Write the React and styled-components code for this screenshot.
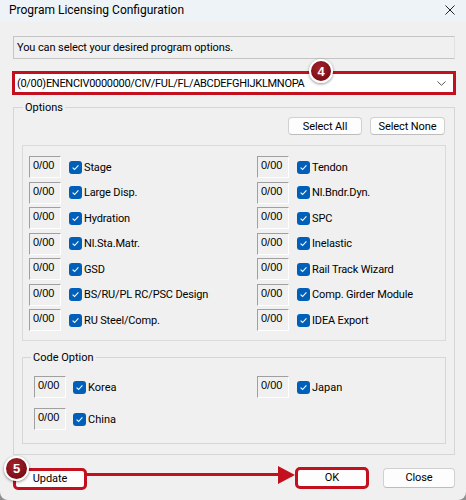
import React from "react";
import styled, { createGlobalStyle } from "styled-components";

const ui = `Roboto, "Noto Sans", "Liberation Sans", sans-serif`;
const classic = `"Liberation Sans", Arial, sans-serif`;
const red = "#c3101e";

const GlobalStyle = createGlobalStyle`
  html, body {
    margin: 0;
    padding: 0;
    background: #8f8f8f;
  }
  body {
    font-family: ${ui};
  }
`;

const Window = styled.div`
  width: 466px;
  height: 500px;
  background: #f0f0f0;
  border-radius: 0 0 8px 8px;
  overflow: hidden;
  display: flex;
  flex-direction: column;
  font-family: ${ui};
  color: #000;
`;

const TitleBar = styled.div`
  height: 22px;
  flex: none;
  box-sizing: border-box;
  padding: 0 11px 2px 9px;
  display: flex;
  align-items: center;
  justify-content: space-between;
  background: #eef3f8;
  font-size: 12px;
`;

const Body = styled.div`
  flex: 1;
  display: flex;
  flex-direction: column;
  padding: 0 11px 0 13px;
`;

const InfoBox = styled.div`
  margin-top: 14px;
  height: 23px;
  box-sizing: border-box;
  padding-left: 3px;
  display: flex;
  align-items: center;
  border: 1px solid #c4c4c4;
  border-right-color: #e2e2e2;
  font-size: 11px;
  letter-spacing: -0.1px;
`;

const ComboWrap = styled.div`
  position: relative;
  margin: 12px -1px 0;
`;

const Combo = styled.div`
  height: 24px;
  box-sizing: border-box;
  border: 3px solid ${red};
  background: #fff;
  padding: 0 7px 0 2px;
  display: flex;
  align-items: center;
  justify-content: space-between;
  font-size: 11px;
  letter-spacing: -0.3px;
`;

const Badge = styled.div`
  position: absolute;
  left: ${(p) => p.$left}px;
  top: ${(p) => p.$top}px;
  width: ${(p) => p.$size}px;
  height: ${(p) => p.$size}px;
  box-sizing: border-box;
  border-radius: 50%;
  border: 2px solid #fff;
  background: radial-gradient(circle at 40% 35%, #a3222b, #7c0f17 70%);
  box-shadow: 0 1px 3px rgba(0, 0, 0, 0.45);
  color: #fff;
  font-family: ${classic};
  font-weight: bold;
  font-size: 13px;
  display: flex;
  align-items: center;
  justify-content: center;
  z-index: 2;
`;

const Group = styled.fieldset`
  margin: ${(p) => p.$mt}px 0 0;
  padding: ${(p) => p.$pad};
  min-width: 0;
  border: 1px solid #d6d6d6;
`;

const Legend = styled.legend`
  margin-left: ${(p) => p.$ml}px;
  padding: 0 2px;
  font-size: 11px;
  line-height: 15px;
`;

const SelectRow = styled.div`
  display: flex;
  justify-content: flex-end;
  gap: 8px;
  padding-right: 1px;
`;

const Button = styled.button`
  width: ${(p) => p.$w}px;
  height: ${(p) => p.$h}px;
  box-sizing: border-box;
  padding: 0;
  background: #fdfdfd;
  border: 1px solid #d0d0d0;
  border-bottom-color: #bdbdbd;
  border-radius: 4px;
  font-family: ${ui};
  font-size: 11px;
  letter-spacing: -0.1px;
  color: #000;
  outline: ${(p) => (p.$marked ? `3px solid ${red}` : "none")};
  outline-offset: -2px;
  flex: none;
`;

const CheckPanel = styled.div`
  margin-top: 10px;
  border: 1px solid #dadada;
  padding: 10px 0 9px 6px;
  display: grid;
  grid-template-columns: 228px 1fr;
  grid-template-rows: repeat(7, 22px);
  grid-auto-flow: column;
  row-gap: 3.5px;
`;

const CodeGrid = styled.div`
  display: grid;
  grid-template-columns: 223px 1fr;
  grid-auto-rows: 22px;
  row-gap: 10px;
`;

const Option = styled.div`
  display: flex;
  align-items: center;
`;

const ValueBox = styled.div`
  width: 32px;
  height: 22px;
  box-sizing: border-box;
  flex: none;
  padding: 1px 0 0 3px;
  background: #f0f0f0;
  border: 1px solid #fff;
  border-top-color: #a0a0a0;
  border-left-color: #a0a0a0;
  font-family: ${classic};
  font-size: 11px;
  line-height: 14px;
`;

const Check = styled.span`
  width: 13px;
  height: 13px;
  flex: none;
  margin-left: ${(p) => p.$ml}px;
  border-radius: 3px;
  background: #005fb8;
  display: flex;
  align-items: center;
  justify-content: center;
`;

const Label = styled.span`
  margin-left: 2px;
  font-family: ${ui};
  font-size: 11px;
  letter-spacing: ${(p) => (p.$ui ? 0 : -0.15)}px;
  white-space: nowrap;
`;

const Footer = styled.div`
  margin: 12px 0 0 1px;
  display: flex;
  align-items: center;
`;

const Marked = styled.div`
  position: relative;
  flex: none;
`;

const Arrow = styled.svg`
  flex: 1;
  height: 20px;
  overflow: visible;
`;

const CloseGap = styled.div`
  width: 15px;
  flex: none;
`;

const Tick = () => (
  <svg width="9" height="9" viewBox="0 0 9 9">
    <path d="M1.6 4.6 L3.6 6.5 L7.4 2.3" fill="none" stroke="#fff" strokeWidth="1.1" />
  </svg>
);

const OptionItem = ({ label, ml = 8, uiFont }) => (
  <Option>
    <ValueBox>0/00</ValueBox>
    <Check $ml={ml}>
      <Tick />
    </Check>
    <Label $ui={uiFont}>{label}</Label>
  </Option>
);

const options = [
  "Stage",
  "Large Disp.",
  "Hydration",
  "Nl.Sta.Matr.",
  "GSD",
  "BS/RU/PL RC/PSC Design",
  "RU Steel/Comp.",
  "Tendon",
  "Nl.Bndr.Dyn.",
  "SPC",
  "Inelastic",
  "Rail Track Wizard",
  "Comp. Girder Module",
  "IDEA Export",
];

export default function App() {
  return (
    <>
      <GlobalStyle />
      <Window>
        <TitleBar>
          <span>Program Licensing Configuration</span>
          <svg width="10" height="10" viewBox="0 0 10 10">
            <path d="M0.5 0.5 L9.5 9.5 M9.5 0.5 L0.5 9.5" stroke="#222" strokeWidth="1" />
          </svg>
        </TitleBar>
        <Body>
          <InfoBox>You can select your desired program options.</InfoBox>
          <ComboWrap>
            <Combo>
              <span>(0/00)ENENCIV0000000/CIV/FUL/FL/ABCDEFGHIJKLMNOPA</span>
              <svg width="9" height="5" viewBox="0 0 9 5">
                <path d="M0.5 0.5 L4.5 4.3 L8.5 0.5" fill="none" stroke="#555" strokeWidth="1" />
              </svg>
            </Combo>
            <Badge $left={297} $top={-12} $size={24}>4</Badge>
          </ComboWrap>

          <Group $mt={5} $pad="2px 8px 10px 8px">
            <Legend $ml={1}>Options</Legend>
            <SelectRow>
              <Button $w={74} $h={18}>Select All</Button>
              <Button $w={75} $h={18}>Select None</Button>
            </SelectRow>
            <CheckPanel>
              {options.map((o) => (
                <OptionItem key={o} label={o} />
              ))}
            </CheckPanel>
            <Group $mt={9} $pad="11px 0 13px 11px">
              <Legend $ml={-3}>Code Option</Legend>
              <CodeGrid>
                <OptionItem label="Korea" ml={7} uiFont />
                <OptionItem label="Japan" ml={8} uiFont />
                <OptionItem label="China" ml={7} uiFont />
              </CodeGrid>
            </Group>
          </Group>

          <Footer>
            <Marked>
              <Button $w={72} $h={20} $marked>Update</Button>
              <Badge $left={-10} $top={-11} $size={25}>5</Badge>
            </Marked>
            <Arrow viewBox="0 0 210 20" preserveAspectRatio="none">
              <line x1="1" y1="6.5" x2="195" y2="6.5" stroke={red} strokeWidth="3" />
              <polygon points="192,-2 209,7 192,16" fill={red} />
            </Arrow>
            <Button $w={72} $h={20} $marked>OK</Button>
            <CloseGap />
            <Button $w={72} $h={20}>Close</Button>
          </Footer>
        </Body>
      </Window>
    </>
  );
}
